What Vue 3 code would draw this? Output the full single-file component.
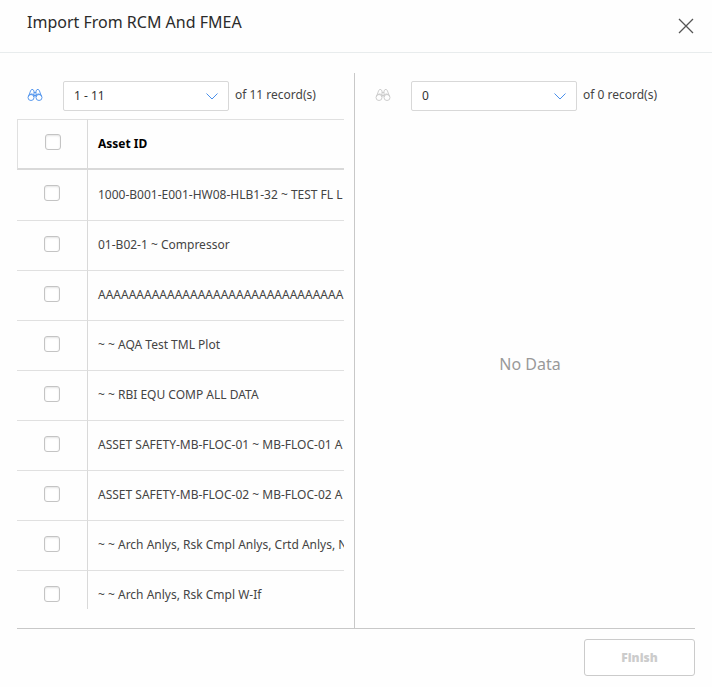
<script setup>
import { ref } from 'vue'

const assets = ref([
  '1000-B001-E001-HW08-HLB1-32 ~ TEST FL L',
  '01-B02-1 ~ Compressor',
  'AAAAAAAAAAAAAAAAAAAAAAAAAAAAAAAA',
  '~ ~ AQA Test TML Plot',
  '~ ~ RBI EQU COMP ALL DATA',
  'ASSET SAFETY-MB-FLOC-01 ~ MB-FLOC-01 A',
  'ASSET SAFETY-MB-FLOC-02 ~ MB-FLOC-02 A',
  '~ ~ Arch Anlys, Rsk Cmpl Anlys, Crtd Anlys, No',
  '~ ~ Arch Anlys, Rsk Cmpl W-If',
])
const binoculars = 'M1 8.500 3 3 4 1.500H5.500L6.500 3v6M14 8.500 12 3 11 1.500H9.500L8.500 3v6M6.500 4.500h2M6.500 7.500h2M2 6.500Q4.500 5 6.500 7M13 6.500Q10.500 5 8.500 7'
</script>

<template>
  <div class="dialog">
    <header class="header">
      <h1>Import From RCM And FMEA</h1>
      <button class="close" aria-label="Close">
        <svg width="16" height="16" viewBox="0 0 16 16"><path d="M1 1 15 15M15 1 1 15" /></svg>
      </button>
    </header>
    <main class="panes">
      <section class="pane source">
        <div class="toolbar">
          <button class="find" aria-label="Find">
            <svg width="16" height="14" viewBox="0 0 15 14"><path :d="binoculars" /><circle cx="3.500" cy="9.500" r="3" /><circle cx="11.500" cy="9.500" r="3" /></svg>
          </button>
          <div class="picker">
            <select aria-label="Source records"><option>1 - 11</option></select>
            <svg class="chevron" width="12" height="7" viewBox="0 0 12 7"><path d="M.5.5 6 6 11.500.5" /></svg>
          </div>
          <span class="count">of 11 record(s)</span>
        </div>
        <div class="grid">
          <table>
            <thead>
              <tr>
                <th class="pick"><input type="checkbox" aria-label="Select all" /></th>
                <th>Asset ID</th>
              </tr>
            </thead>
            <tbody>
              <tr v-for="asset in assets" :key="asset">
                <td class="pick"><input type="checkbox" :aria-label="asset" /></td>
                <td>{{ asset }}</td>
              </tr>
            </tbody>
          </table>
        </div>
      </section>
      <section class="pane target">
        <div class="toolbar">
          <button class="find" disabled aria-label="Find">
            <svg width="16" height="14" viewBox="0 0 15 14"><path :d="binoculars" /><circle cx="3.500" cy="9.500" r="3" /><circle cx="11.500" cy="9.500" r="3" /></svg>
          </button>
          <div class="picker">
            <select aria-label="Selected records"><option>0</option></select>
            <svg class="chevron" width="12" height="7" viewBox="0 0 12 7"><path d="M.5.5 6 6 11.500.5" /></svg>
          </div>
          <span class="count">of 0 record(s)</span>
        </div>
        <div class="empty">No Data</div>
      </section>
    </main>
    <footer class="footer">
      <button class="finish" disabled>Finish</button>
    </footer>
  </div>
</template>

<style>
body {
  background: #fefefe;
}
</style>

<style scoped>
.dialog,
.dialog * {
  box-sizing: border-box;
}
.dialog {
  display: flex;
  flex-direction: column;
  height: 100vh;
  font-family: "Noto Sans", sans-serif;
  font-size: 12px;
  color: #444;
}
button,
select {
  font-family: inherit;
}
svg {
  display: block;
  fill: none;
  stroke: currentColor;
}
.header {
  display: flex;
  justify-content: space-between;
  height: 53px;
  padding: 10px 18px 0 27px;
  border-bottom: 1px solid #e8eced;
}
h1 {
  margin: 0;
  font-size: 16px;
  line-height: 24px;
  font-weight: 400;
  color: #2b2b2b;
}
.close {
  height: 16px;
  margin-top: 8px;
  padding: 0;
  border: 0;
  background: none;
  color: #555;
}
.close svg {
  stroke-width: 1.3;
}
.panes {
  flex: 1;
  display: grid;
  grid-template-columns: minmax(0, 169fr) minmax(0, 170fr);
  grid-template-rows: minmax(0, 1fr);
  min-height: 0;
  margin: 20px 17px 0;
  border-bottom: 1px solid #c8c8c8;
}
.pane {
  display: flex;
  flex-direction: column;
  padding-bottom: 19px;
}
.source {
  padding-right: 10px;
  border-right: 1px solid #c8c8c8;
}
.target {
  padding-left: 10px;
}
.toolbar {
  flex: none;
  display: flex;
  align-items: flex-start;
  height: 46px;
  padding: 8px 0 0 10px;
}
.find {
  width: 16px;
  margin: 7px 20px 0 0;
  padding: 0;
  border: 0;
  background: none;
  color: #4a90ec;
}
.find:disabled {
  color: #c8c8c8;
}
.find svg {
  stroke-width: 0.9;
}
.picker {
  position: relative;
  width: 166px;
}
select {
  appearance: none;
  display: block;
  width: 100%;
  height: 30px;
  padding: 0 10px 2px;
  border: 1px solid #d8d8d8;
  border-radius: 2px;
  background: #fff;
  font-size: 12px;
  color: #333;
}
.chevron {
  position: absolute;
  right: 11px;
  top: 12px;
  color: #4a90ec;
  pointer-events: none;
}
.count {
  margin-left: 6px;
  line-height: 28px;
  white-space: nowrap;
}
.grid {
  flex: 1;
  min-height: 0;
  overflow: hidden;
}
table {
  width: 100%;
  table-layout: fixed;
  border-collapse: separate;
  border-spacing: 0;
}
th,
td {
  height: 50px;
  padding: 0 0 2px 10px;
  text-align: left;
  white-space: nowrap;
  overflow: hidden;
  border-bottom: 1px solid #e0e0e0;
}
tr:first-child td {
  height: 51px;
}
th {
  height: 51px;
  border-top: 1px solid #e0e0e0;
  border-bottom: 2px solid #d9d9d9;
  color: #000;
}
.pick {
  width: 71px;
  padding-left: 0;
  border-right: 1px solid #d9d9d9;
}
th.pick {
  border-left: 1px solid #e0e0e0;
}
input {
  appearance: none;
  display: block;
  width: 16px;
  height: 16px;
  margin: 0 auto 2px;
  border: 1px solid #c4c4c4;
  border-radius: 3px;
  background: #fff;
  box-shadow: inset 0 1px 2px #e4e4e4;
}
.empty {
  flex: 1;
  display: flex;
  align-items: center;
  justify-content: center;
  font-size: 16px;
  color: #999;
}
.footer {
  display: flex;
  justify-content: flex-end;
  padding: 10px 17px 11px;
}
.finish {
  width: 111px;
  height: 37px;
  border: 1px solid #cbcbcb;
  border-radius: 3px;
  background: #fff;
  font-size: 12px;
  font-weight: 900;
  color: #ccc;
}
</style>
